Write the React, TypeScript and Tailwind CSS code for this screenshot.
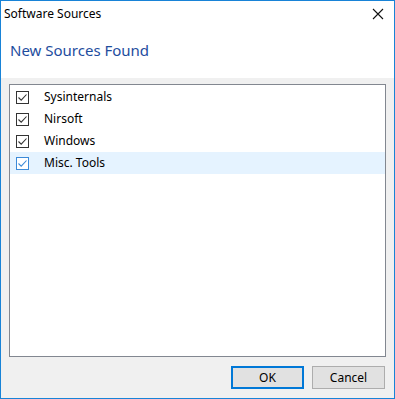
import React from "react";

const items = [
  { label: "Sysinternals", selected: false },
  { label: "Nirsoft", selected: false },
  { label: "Windows", selected: false },
  { label: "Misc. Tools", selected: true },
];

function Check({ selected }: { selected: boolean }) {
  const c = selected ? "#3c8ad8" : "#333333";
  return (
    <div
      className="w-[13px] h-[13px] border flex items-center justify-center bg-white"
      style={{ borderColor: c }}
    >
      <svg width="11" height="11" viewBox="0 0 11 11">
        <path d="M1.5 5.5 L4.2 8.2 L9.5 2.5" fill="none" stroke={c} strokeWidth="1.1" />
      </svg>
    </div>
  );
}

export default function App() {
  return (
    <div
      className="w-[395px] h-[399px] border border-[#1883d7] bg-[#f0f0f0] flex flex-col"
      style={{ fontFamily: '"Noto Sans", "Open Sans", sans-serif' }}
    >
      <div className="bg-white flex flex-col h-[77px]">
        <div className="h-[30px] flex items-start justify-between pl-[3px] pr-[10px] pt-[7px]">
          <span className="text-[12px] text-black leading-none">Software Sources</span>
          <svg width="12" height="12" viewBox="0 0 12 12">
            <path d="M1 1 L11 11 M11 1 L1 11" stroke="#111" strokeWidth="1.1" />
          </svg>
        </div>
        <div className="pl-[9px] pt-[12px] text-[15px] text-[#1e4d9e] leading-none">
          New Sources Found
        </div>
      </div>
      <div className="flex-1 flex flex-col px-[8px] pt-[6px] pb-[9px]">
        <div className="flex-1 bg-white border border-[#828790] pt-[1px]">
          {items.map((it) => (
            <div
              key={it.label}
              className={`h-[22px] flex items-center pl-[6px] ${it.selected ? "bg-[#e5f3ff]" : ""}`}
            >
              <Check selected={it.selected} />
              <span className="ml-[15px] text-[12px] text-black">{it.label}</span>
            </div>
          ))}
        </div>
        <div className="flex justify-end gap-[8px] mt-[9px] pr-[1px]">
          <button className="w-[73px] h-[23px] bg-[#e1e1e1] border-2 border-[#0078d7] text-[12px] text-black">
            OK
          </button>
          <button className="w-[73px] h-[23px] bg-[#e1e1e1] border border-[#adadad] text-[12px] text-black">
            Cancel
          </button>
        </div>
      </div>
    </div>
  );
}
